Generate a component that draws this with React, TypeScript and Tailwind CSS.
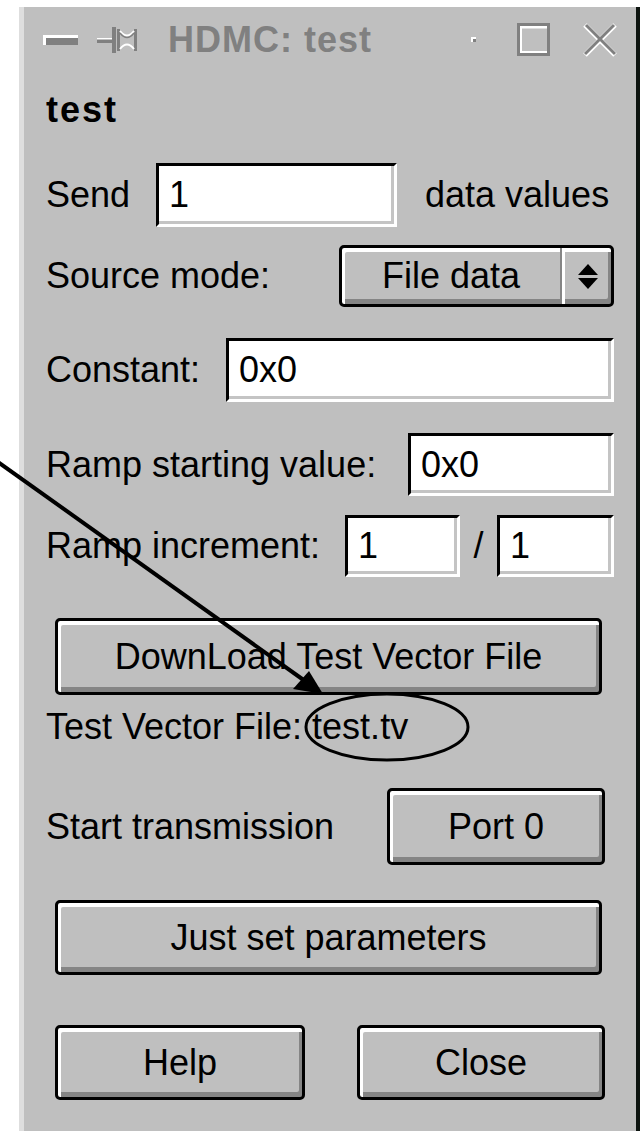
import type { ReactNode } from "react";

const raised =
  "rounded-[5px] border-[3px] border-black bg-[#bfbfbf] shadow-[inset_3px_4px_0_#ffffff,inset_-3px_-5px_0_#858585]";

function Field({ value, className }: { value: string; className: string }) {
  return (
    <div
      className={`flex items-center border-[3px] border-t-black border-l-black border-r-white border-b-white bg-white pl-[10px] shadow-[inset_-3px_-3px_0_#c4c4c4] ${className}`}
    >
      {value}
    </div>
  );
}

function Button({ children, className }: { children: ReactNode; className: string }) {
  return (
    <button type="button" className={`flex items-center justify-center ${raised} ${className}`}>
      {children}
    </button>
  );
}

function TitleBar() {
  return (
    <div className="flex h-[65px] items-center">
      <div className="ml-[19px] h-[10px] w-[35px] border-l-[3px] border-t-[3px] border-white bg-[#808080]" />
      <svg className="ml-[19px]" width="42" height="30" viewBox="0 0 42 30">
        <rect x="0" y="14" width="16" height="4" fill="#808080" />
        <rect x="0" y="13" width="16" height="1.5" fill="#ffffff" />
        <rect x="15" y="2" width="4" height="26" fill="#808080" />
        <rect x="20" y="4" width="3" height="22" fill="#808080" />
        <rect x="37" y="4" width="3" height="22" fill="#808080" />
        <path d="M23 6 Q30 15 37 6" stroke="#ffffff" strokeWidth="2" fill="none" />
        <path d="M23 24 Q30 15 37 24" stroke="#ffffff" strokeWidth="2" fill="none" />
        <path d="M23 8 Q30 17 37 8" stroke="#808080" strokeWidth="1.5" fill="none" />
      </svg>
      <span className="ml-[29px] whitespace-nowrap text-[36px] font-bold leading-none tracking-[1px] text-[#808080]">
        HDMC: test
      </span>
      <div className="ml-[99px] h-[5px] w-[5px] border-l-2 border-t-2 border-white bg-[#808080]" />
      <svg className="ml-[41px]" width="33" height="33" viewBox="0 0 33 33">
        <rect x="1.5" y="1.5" width="30" height="30" fill="none" stroke="#808080" strokeWidth="3" />
        <rect x="3" y="3" width="27" height="2.5" fill="#ffffff" />
        <rect x="3" y="28" width="27" height="2" fill="#ffffff" />
        <rect x="3" y="3" width="2" height="25" fill="#ffffff" />
      </svg>
      <svg className="ml-[32px]" width="36" height="36" viewBox="0 0 36 36">
        <path d="M3 3 L33 33 M33 3 L3 33" stroke="#ffffff" strokeWidth="5" />
        <path d="M4 3 L33 32 M32 3 L3 32" stroke="#808080" strokeWidth="3" />
      </svg>
    </div>
  );
}

function SourceSelect() {
  return (
    <div className={`ml-auto flex h-[62px] w-[275px] ${raised}`}>
      <div className="flex w-[218px] items-center justify-center">File data</div>
      <div className="w-[2px] bg-[#858585]" />
      <div className="flex flex-1 items-center justify-center border-l-[3px] border-white">
        <svg width="20" height="25" viewBox="0 0 20 25">
          <polygon points="10,0 20,11 0,11" fill="#000000" />
          <polygon points="0,14 20,14 10,25" fill="#000000" />
        </svg>
      </div>
    </div>
  );
}

export default function App() {
  return (
    <div className="relative h-[1131px] w-[643px] overflow-hidden bg-white font-['Liberation_Sans',Arial,sans-serif] text-black">
      <div className="ml-[19px] mt-[7px] h-[1124px] w-[621px] border-l-[5px] border-r-[4px] border-l-[#dedede] border-r-[#0d140f] bg-[#bfbfbf]">
        <TitleBar />

        <div className="whitespace-nowrap px-[22px] text-[36px] leading-none">
          <div className="mt-[20px] flex h-[36px] items-center font-bold tracking-[2px]">test</div>

          <div className="mt-[35px] flex h-[64px] items-center">
            <span className="w-[110px] shrink-0">Send</span>
            <Field value="1" className="h-[64px] w-[241px] shrink-0" />
            <span className="ml-[28px] shrink-0">data values</span>
          </div>

          <div className="mt-[18px] flex h-[62px] items-center">
            <span>Source mode:</span>
            <SourceSelect />
          </div>

          <div className="mt-[31px] flex h-[64px] items-center">
            <span>Constant:</span>
            <Field value="0x0" className="ml-auto h-[64px] w-[388px]" />
          </div>

          <div className="mt-[31px] flex h-[63px] items-center">
            <span>Ramp starting value:</span>
            <Field value="0x0" className="ml-auto h-[63px] w-[206px]" />
          </div>

          <div className="mt-[19px] flex h-[62px] items-center">
            <span>Ramp increment:</span>
            <Field value="1" className="ml-auto h-[62px] w-[115px]" />
            <span className="w-[37px] text-center">/</span>
            <Field value="1" className="h-[62px] w-[117px]" />
          </div>

          <Button className="ml-[9px] mt-[41px] h-[77px] w-[547px]">DownLoad Test Vector File</Button>

          <div className="mt-[14px] flex h-[36px] items-center">Test Vector File: test.tv</div>

          <div className="mt-[43px] flex h-[77px] items-center">
            <span>Start transmission</span>
            <Button className="ml-auto mr-[9px] h-[77px] w-[218px]">Port 0</Button>
          </div>

          <Button className="ml-[9px] mt-[35px] h-[75px] w-[547px]">Just set parameters</Button>

          <div className="mt-[50px] flex h-[75px]">
            <Button className="ml-[9px] h-[75px] w-[250px]">Help</Button>
            <Button className="ml-[52px] h-[75px] w-[248px]">Close</Button>
          </div>
        </div>
      </div>

      {/* annotation: arrow pointing at the file name, which is circled */}
      <svg className="pointer-events-none absolute left-0 top-0" width="643" height="1131" viewBox="0 0 643 1131">
        <line x1="-2" y1="462" x2="305" y2="681" stroke="#000000" strokeWidth="4" />
        <polygon points="293,689 309,671 323,694" fill="#000000" />
        <ellipse cx="387" cy="727" rx="81" ry="33" fill="none" stroke="#000000" strokeWidth="3" />
      </svg>
    </div>
  );
}
